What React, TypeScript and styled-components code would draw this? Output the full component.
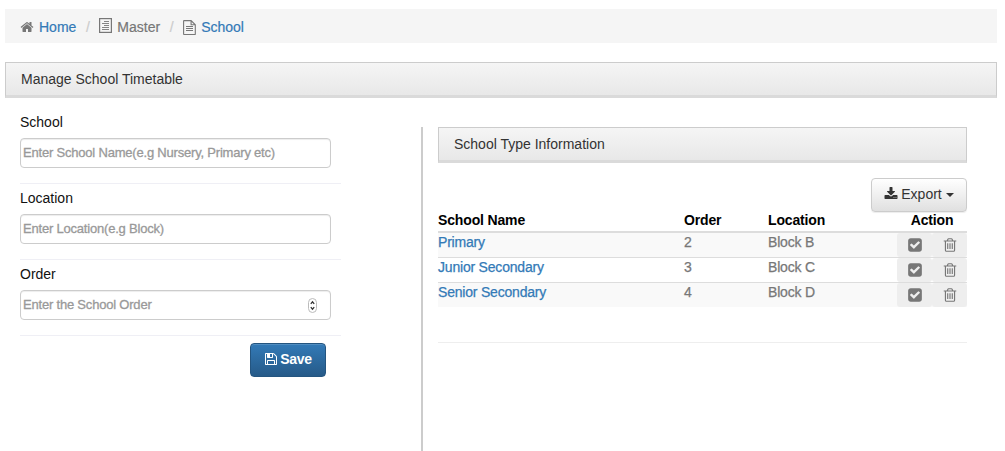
import React from 'react';
import styled, { createGlobalStyle } from 'styled-components';

const GlobalStyle = createGlobalStyle`
  *, *::before, *::after { box-sizing: border-box; }
  body {
    margin: 0;
    background: #fff;
    color: #333;
    font: 14px/20px "Liberation Sans", Arial, sans-serif;
    overflow: hidden;
  }
`;

const paths = {
  home: 'M1472 992v480q0 26-19 45t-45 19h-384v-384h-256v384h-384q-26 0-45-19t-19-45v-480q0-1 .5-3t.5-3l575-474 575 474q1 2 1 6zm223-69l-62 74q-8 9-21 11h-3q-13 0-21-7l-692-577-692 577q-12 8-24 7-13-2-21-11l-62-74q-8-10-7-23.5t11-21.5l719-599q32-26 76-26t76 26l244 204v-195q0-14 9-23t23-9h192q14 0 23 9t9 23v408l219 182q10 8 11 21.5t-7 23.5z',
  download: 'M1344 1344q0-26-19-45t-45-19-45 19-19 45 19 45 45 19 45-19 19-45zm256 0q0-26-19-45t-45-19-45 19-19 45 19 45 45 19 45-19 19-45zm128-224v320q0 40-28 68t-68 28h-1472q-40 0-68-28t-28-68v-320q0-40 28-68t68-28h465l135 136q58 56 136 56t136-56l136-136h464q40 0 68 28t28 68zm-325-569q17 41-14 70l-448 448q-18 19-45 19t-45-19l-448-448q-31-29-14-70 17-39 59-39h256v-448q0-26 19-45t45-19h256q26 0 45 19t19 45v448h256q42 0 59 39z',
  trash: 'M704 736v576q0 14-9 23t-23 9h-64q-14 0-23-9t-9-23v-576q0-14 9-23t23-9h64q14 0 23 9t9 23zm256 0v576q0 14-9 23t-23 9h-64q-14 0-23-9t-9-23v-576q0-14 9-23t23-9h64q14 0 23 9t9 23zm256 0v576q0 14-9 23t-23 9h-64q-14 0-23-9t-9-23v-576q0-14 9-23t23-9h64q14 0 23 9t9 23zm128 724v-948h-896v948q0 22 7 40.5t14.5 27 10.5 8.5h832q3 0 10.5-8.5t14.5-27 7-40.5zm-672-1076h448l-48-117q-7-9-17-11h-317q-10 2-17 11zm928 32v64q0 14-9 23t-23 9h-96v948q0 83-47 143.5t-113 60.5h-832q-66 0-113-58.5t-47-141.5v-952h-96q-14 0-23-9t-9-23v-64q0-14 9-23t23-9h309l70-167q15-37 54-63t79-26h320q40 0 79 26t54 63l70 167h309q14 0 23 9t9 23z',
  check: 'M813 1299l614-614q19-19 19-45t-19-45l-102-102q-19-19-45-19t-45 19l-467 467-211-211q-19-19-45-19t-45 19l-102 102q-19 19-19 45t19 45l358 358q19 19 45 19t45-19zm851-883v960q0 119-84.5 203.5t-203.5 84.5h-960q-119 0-203.5-84.5t-84.5-203.5v-960q0-119 84.5-203.5t203.5-84.5h960q119 0 203.5 84.5t84.5 203.5z',
  save: 'M512 1536h768v-384h-768v384zm896 0h128v-896q0-14-10-38.5t-20-34.5l-281-281q-10-10-34-20t-39-10v416q0 40-28 68t-68 28h-576q-40 0-68-28t-28-68v-416h-128v1280h128v-416q0-40 28-68t68-28h832q40 0 68 28t28 68v416zm-384-928v-320q0-13-9.5-22.5t-22.5-9.5h-192q-13 0-22.5 9.5t-9.5 22.5v320q0 13 9.5 22.5t22.5 9.5h192q13 0 22.5-9.5t9.5-22.5zm640 32v928q0 40-28 68t-68 28h-1344q-40 0-68-28t-28-68v-1344q0-40 28-68t68-28h928q40 0 88 20t76 48l280 280q28 28 48 76t20 88z',
};

const Svg = styled.svg`
  display: block;
  flex: none;
`;

function Icon({ name, size = 14 }: { name: keyof typeof paths; size?: number }) {
  return (
    <Svg width={size} height={size} viewBox="0 0 1792 1792" fill="currentColor" aria-hidden>
      <path d={paths[name]} />
    </Svg>
  );
}

const ListSvg = styled(Svg)`
  margin-bottom: 3px;
`;

const ListIcon = () => (
  <ListSvg width="13" height="15" viewBox="0 0 13 15" fill="none" stroke="currentColor" aria-hidden>
    <rect x=".6" y=".6" width="11.8" height="13.8" strokeWidth="1.2" />
    <path d="M5 3.5h5M3 5.5h7M5 7.5h5M3 9.5h7M3 11.5h7" strokeWidth=".9" />
  </ListSvg>
);

const FileIcon = () => (
  <Svg width="13" height="15" viewBox="0 0 13 15" fill="none" stroke="currentColor" aria-hidden>
    <path d="M1.1.6h7l4.2 4.2v9.4q0 .3-.3.3H1q-.4 0-.4-.4V1Q.6.6 1.1.6zM8.1.6v4.2h4.2" strokeWidth="1.1" />
    <path d="M3 6.5h7M3 8.5h7M3 10.5h7" />
  </Svg>
);

const Page = styled.main`
  height: 451px;
  padding: 9px 8px 0 5px;
  overflow: hidden;
`;

const Breadcrumb = styled.nav`
  display: flex;
  align-items: center;
  height: 34px;
  padding: 2px 15px 0;
  background: #f5f5f5;
  color: #777;
  -webkit-text-stroke: 0.2px currentColor;
`;

const Crumb = styled.span`
  display: flex;
  align-items: center;
  gap: 5px;
`;

const Separator = styled.span`
  width: 23px;
  text-align: center;
  color: #ccc;
`;

const Link = styled.a`
  color: #337ab7;
`;

const PanelTitle = styled.h2`
  height: 36px;
  margin: 0;
  padding: 6px 15px 0;
  border: 1px solid #ccc;
  border-bottom: 3px solid #dadada;
  background: linear-gradient(#f5f5f5, #e8e8e8);
  font: inherit;
`;

const MainTitle = styled(PanelTitle)`
  margin-top: 19px;
`;

const Columns = styled.div`
  display: grid;
  grid-template-columns: 321px 546px;
  column-gap: 80px;
  padding: 10px 0 0 15px;
`;

const Form = styled.form`
  display: flex;
  flex-direction: column;
  padding-top: 4px;
`;

const Field = styled.label`
  display: block;
  height: 76px;
  border-bottom: 1px solid #efeff5;
  color: #111;
  &:first-child { height: 72px; }
  &:not(:first-child) { padding-top: 4px; }
`;

const InputBox = styled.span`
  display: flex;
  align-items: center;
  width: 311px;
  height: 30px;
  margin-top: 6px;
  padding: 0 13px 0 2px;
  border: 1px solid #ccc;
  border-radius: 4px;
  box-shadow: inset 0 1px 1px rgba(0, 0, 0, 0.075);
`;

const Input = styled.input`
  flex: 1;
  min-width: 0;
  padding: 0;
  border: 0;
  outline: 0;
  background: none;
  font: 13px/20px "Liberation Sans", Arial, sans-serif;
  letter-spacing: -0.2px;
  &::placeholder {
    color: #999;
    opacity: 1;
    -webkit-text-stroke: 0.3px #999;
  }
`;

const Stepper = () => (
  <Svg width="9" height="15" viewBox="0 0 9 15" fill="none" aria-hidden>
    <rect x=".5" y=".5" width="8" height="14" rx="4" stroke="#bbb" />
    <path d="M2.8 5.8 4.5 3.8 6.2 5.8M2.8 9.2 4.5 11.2 6.2 9.2" stroke="#333" strokeWidth="1.3" />
  </Svg>
);

const Button = styled.button<{ $primary?: boolean }>`
  display: flex;
  align-items: center;
  justify-content: center;
  height: 34px;
  padding: 0;
  border: 1px solid ${(p) => (p.$primary ? '#245580' : '#ccc')};
  border-radius: 4px;
  background: ${(p) => (p.$primary ? 'linear-gradient(#337ab7, #265a88)' : 'linear-gradient(#fff, #e0e0e0)')};
  box-shadow: ${(p) => (p.$primary ? 'inset 0 1px 0 rgba(255,255,255,.15)' : 'inset 0 1px 0 rgba(255,255,255,.15), 0 1px 1px rgba(0,0,0,.075)')};
  color: ${(p) => (p.$primary ? '#fff' : '#333')};
  font: ${(p) => (p.$primary ? 'bold' : 'normal')} 14px/20px "Liberation Sans", Arial, sans-serif;
  letter-spacing: ${(p) => (p.$primary ? '-0.3px' : '0')};
`;

const SaveButton = styled(Button)`
  align-self: flex-end;
  width: 76px;
  margin: 7px 15px 0 0;
  padding-bottom: 2px;
  gap: 2px;
`;

const ExportButton = styled(Button)`
  width: 96px;
  margin: 15px 0 0 auto;
  padding-bottom: 2px;
  gap: 3px;
`;

const Caret = styled.span`
  margin: 2px 0 0 1px;
  border: 4px solid transparent;
  border-top-color: currentColor;
  border-bottom: 0;
`;

const Info = styled.section`
  height: 330px;
  margin-top: 19px;
  padding-left: 15px;
  border-left: 2px solid #ccc;
`;

const Table = styled.table`
  width: 529px;
  border-collapse: separate;
  border-spacing: 0;
  table-layout: fixed;
`;

const Head = styled.th<{ $w: number; $center?: boolean }>`
  width: ${(p) => p.$w}px;
  height: 21px;
  padding: 0 0 2px;
  border-bottom: 2px solid #ddd;
  color: #000;
  font-weight: bold;
  line-height: 17px;
  letter-spacing: -0.15px;
  text-align: ${(p) => (p.$center ? 'center' : 'left')};
`;

const Row = styled.tr`
  color: #777;
  &:nth-child(odd) { background: #f9f9f9; }
  &:not(:first-child) td { border-top: 1px solid #ddd; }
  &:first-child td { height: 24px; }
`;

const Cell = styled.td`
  height: 25px;
  padding: 0;
  vertical-align: top;
  line-height: 18px;
  letter-spacing: -0.2px;
  -webkit-text-stroke: 0.25px currentColor;
`;

const Actions = styled.div`
  display: flex;
`;

const Action = styled.span`
  display: flex;
  align-items: center;
  justify-content: center;
  width: 35px;
  height: 24px;
  border-radius: 3px;
  background: #eee;
`;

const Rule = styled.hr`
  margin: 35px 0 0;
  border: 0;
  border-top: 1px solid #eee;
`;

const fields = [
  { label: 'School', hint: 'Enter School Name(e.g Nursery, Primary etc)' },
  { label: 'Location', hint: 'Enter Location(e.g Block)' },
  { label: 'Order', hint: 'Enter the School Order', stepper: true },
];

const schools = [
  { name: 'Primary', order: 2, location: 'Block B' },
  { name: 'Junior Secondary', order: 3, location: 'Block C' },
  { name: 'Senior Secondary', order: 4, location: 'Block D' },
];

export default function App() {
  return (
    <Page>
      <GlobalStyle />
      <Breadcrumb>
        <Crumb><Icon name="home" /><Link>Home</Link></Crumb>
        <Separator>/</Separator>
        <Crumb><ListIcon />Master</Crumb>
        <Separator>/</Separator>
        <Crumb><FileIcon /><Link>School</Link></Crumb>
      </Breadcrumb>
      <MainTitle>Manage School Timetable</MainTitle>
      <Columns>
        <Form>
          {fields.map((f) => (
            <Field key={f.label}>
              {f.label}
              <InputBox>
                <Input placeholder={f.hint} />
                {f.stepper && <Stepper />}
              </InputBox>
            </Field>
          ))}
          <SaveButton type="button" $primary><Icon name="save" />Save</SaveButton>
        </Form>
        <Info>
          <PanelTitle>School Type Information</PanelTitle>
          <ExportButton type="button"><Icon name="download" />Export<Caret /></ExportButton>
          <Table>
            <thead>
              <tr>
                <Head $w={246}>School Name</Head>
                <Head $w={84}>Order</Head>
                <Head $w={129}>Location</Head>
                <Head $w={70} $center>Action</Head>
              </tr>
            </thead>
            <tbody>
              {schools.map((s) => (
                <Row key={s.name}>
                  <Cell><Link>{s.name}</Link></Cell>
                  <Cell>{s.order}</Cell>
                  <Cell>{s.location}</Cell>
                  <Cell>
                    <Actions>
                      <Action><Icon name="check" size={16} /></Action>
                      <Action><Icon name="trash" size={16} /></Action>
                    </Actions>
                  </Cell>
                </Row>
              ))}
            </tbody>
          </Table>
          <Rule />
        </Info>
      </Columns>
    </Page>
  );
}
